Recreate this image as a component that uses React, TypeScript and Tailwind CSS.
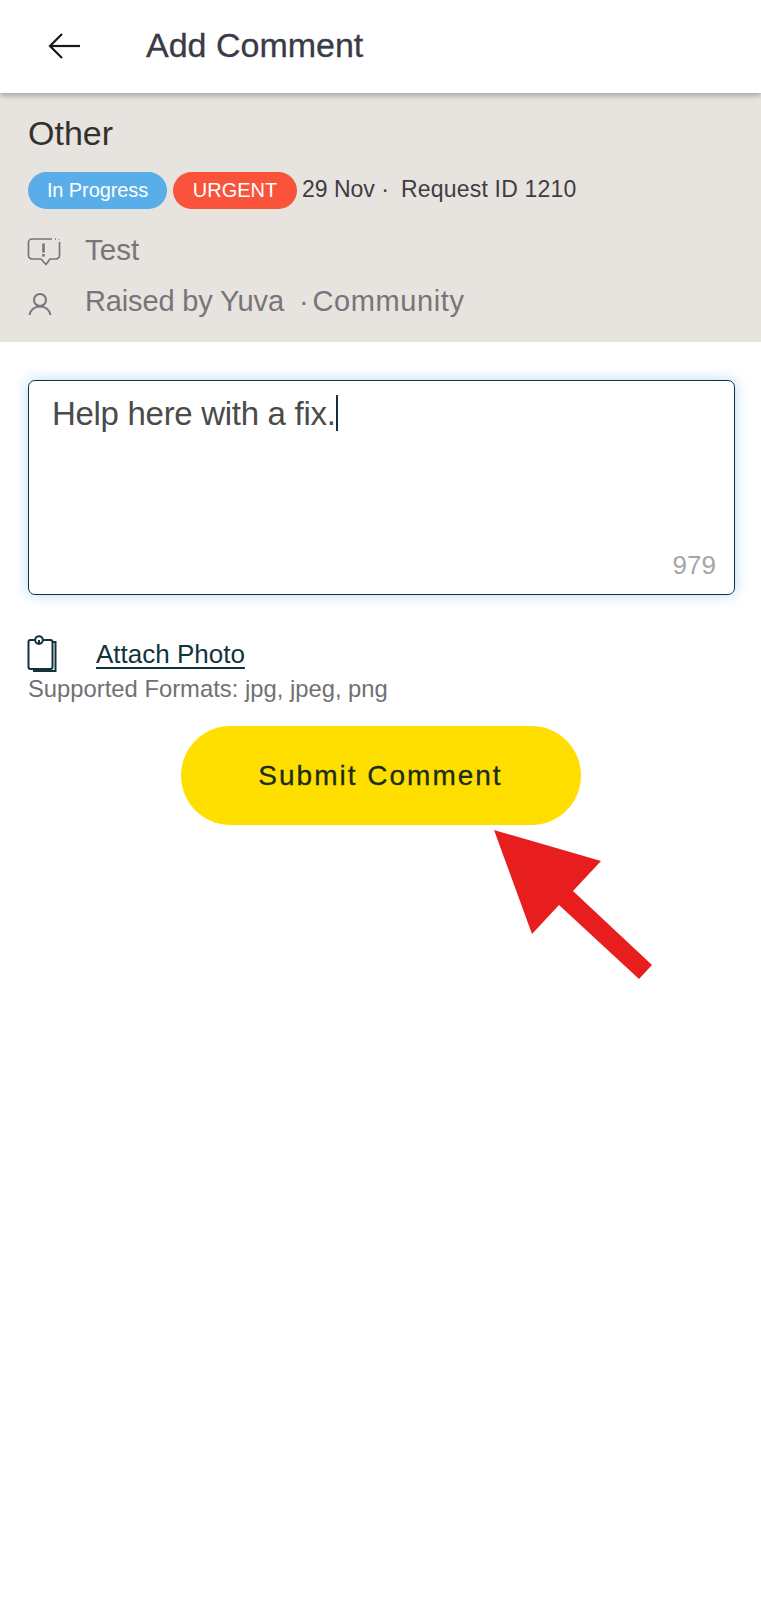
const FONT = "font-['Liberation_Sans',Arial,sans-serif]";

const BackIcon = () => (
  <svg width="34" height="28" viewBox="0 0 34 28" fill="none" stroke="#17171c" strokeWidth="2.2" className="shrink-0 -mt-[2px]">
    <path d="M33 14H3" />
    <path d="M15 2 3 14l12 12" />
  </svg>
);

const AlertComment = () => (
  <svg width="34" height="30" viewBox="0 0 34 30" fill="none" stroke="#77757a" strokeWidth="1.7" className="shrink-0 -ml-[1px] mt-[3px]">
    <path d="M25 2H5a3.500 3.500 0 0 0-3.500 3.500v13A3.500 3.500 0 0 0 5 22h9l5 5.500 4-5.500h6a3.500 3.500 0 0 0 3.500-3.500V5" strokeLinejoin="round" />
    <path d="M28 2h1M32 2.500v.5" />
    <path d="M16.500 6.500v9" strokeWidth="2.600" />
    <path d="M16.500 17v2.600" strokeWidth="2.600" />
  </svg>
);

const PersonIcon = () => (
  <svg width="24" height="24" viewBox="0 0 24 24" fill="none" stroke="#77757a" strokeWidth="2" className="shrink-0 mt-[4px]">
    <circle cx="12" cy="8" r="6" />
    <path d="M1.500 23c1-5 5-8.500 10.500-8.500S21.500 18 22.500 23" />
  </svg>
);

const ClipIcon = () => (
  <svg width="31" height="38" viewBox="0 0 31 38" fill="none" stroke="#12333c" strokeWidth="2" className="shrink-0">
    <rect x="1.500" y="5" width="24" height="29" rx="2" />
    <path d="M26 7h2.500v29H6" />
    <circle cx="12" cy="5" r="3.800" fill="#fff" />
    <path d="M12 5v4.500" />
  </svg>
);

const RedArrow = () => (
  <svg className="absolute left-[490px] top-[826px]" width="170" height="160" viewBox="490 826 170 160">
    <polygon points="494,830 601,861 573,891 652,965 639,979 559,905 532,934" fill="#e81e1e" />
  </svg>
);

export default function App() {
  return (
    <div className={`${FONT} relative w-[761px] h-[1600px] bg-white overflow-hidden`}>
      {/* HEADER */}
      <header className="relative z-10 h-[93px] bg-white flex items-center pl-[47px] gap-[65px] shadow-[0_3px_5px_rgba(90,90,90,0.4)]">
        <BackIcon />
        <h1 className="text-[34px] leading-none text-[#3b3a47] font-normal -mt-[4px] [-webkit-text-stroke:0.3px_#3b3a47]">Add Comment</h1>
      </header>

      {/* REQUEST INFO */}
      <section className="h-[249px] bg-[#e7e3de] pl-7 pt-[21px]">
        <h2 className="text-[34px] leading-[38px] text-[#32312f] font-normal">Other</h2>
        <div className="flex items-center mt-[19px] h-[38px]">
          <span className="h-[37px] w-[139px] rounded-full bg-[#59ade8] text-white text-[20px] flex items-center justify-center tracking-[-0.1px]">In Progress</span>
          <span className="h-[37px] w-[124px] ml-[6px] rounded-full bg-[#fa533c] text-white text-[20px] flex items-center justify-center">URGENT</span>
          <span className="ml-[5px] -mt-[1px] text-[23px] text-[#3f3d44] flex">
            <span>29 Nov ·</span>
            <span className="ml-[12px] tracking-[0.2px]">Request ID 1210</span>
          </span>
        </div>
        <div className="flex items-center mt-[26px] h-[30px] gap-[24px] text-[#77757a] text-[29.500px]">
          <AlertComment />
          <span>Test</span>
        </div>
        <div className="flex items-center mt-[22px] h-[30px] gap-[33px] text-[#77757a] text-[29px]">
          <PersonIcon />
          <span className="flex">
            <span className="tracking-[-0.150px]">Raised by Yuva</span>
            <span className="ml-[15px]">·</span>
            <span className="ml-[4px] tracking-[0.600px]">Community</span>
          </span>
        </div>
      </section>

      {/* COMMENT BOX */}
      <div className="mx-7 mt-[38px] h-[215px] w-[707px] rounded-[7px] border-[1.500px] border-[#12333c] shadow-[0_0_14px_rgba(89,173,232,0.45)] pl-[23px] pr-[18px] pt-[10px] pb-[16px] flex flex-col justify-between">
        <div className="flex items-center h-[44px]">
          <span className="text-[33px] leading-none text-[#4b4b4b] tracking-[-0.300px]">Help here with a fix.</span>
          <span className="w-[2px] h-[36px] bg-[#12333c]"></span>
        </div>
        <div className="text-right text-[26px] leading-none text-[#a5a5a8]">979</div>
      </div>

      {/* ATTACH */}
      <div className="flex items-center pl-[27px] mt-[40px] gap-[39px] h-[38px]">
        <ClipIcon />
        <a className="text-[26px] leading-none text-[#12333c] underline underline-offset-[4px] -ml-[1px]">Attach Photo</a>
      </div>
      <p className="pl-7 mt-[1px] text-[23.800px] leading-[30px] text-[#6f7174]">Supported Formats: jpg, jpeg, png</p>

      {/* SUBMIT */}
      <div className="flex justify-center mt-[22px]">
        <button className="w-[400px] h-[99px] rounded-full bg-[#ffdf00] text-[28px] tracking-[2px] text-[#1b2c18] [-webkit-text-stroke:0.3px_#1b2c18]">
          Submit Comment
        </button>
      </div>

      <RedArrow />
    </div>
  );
}
